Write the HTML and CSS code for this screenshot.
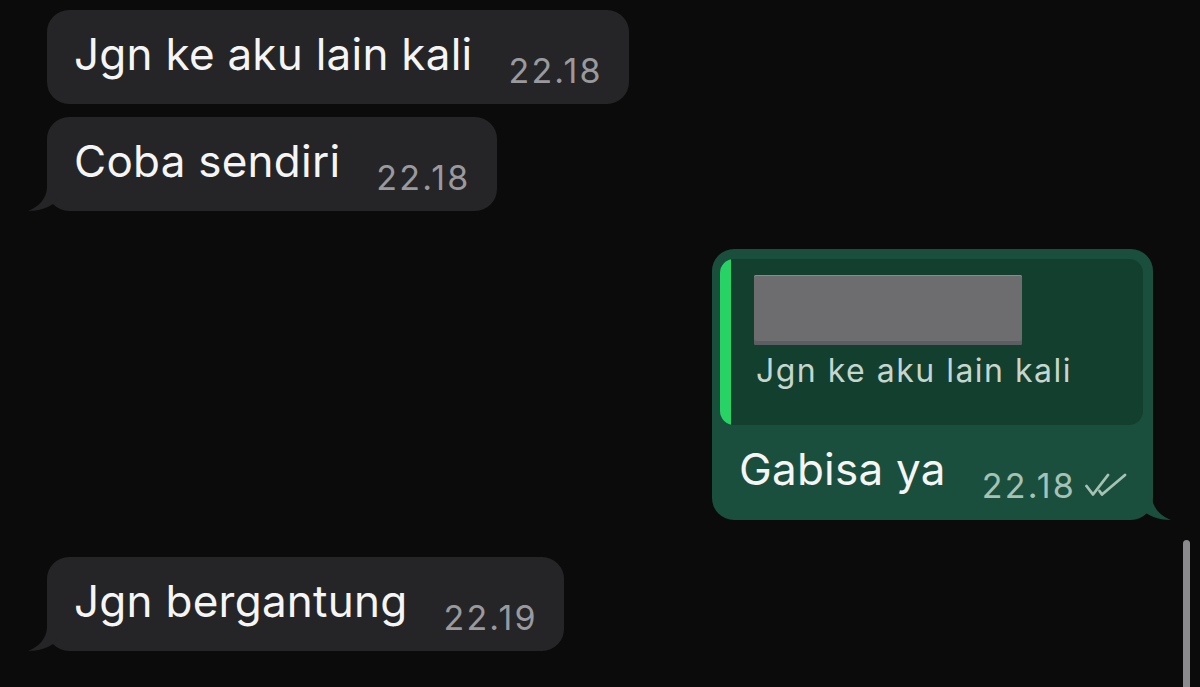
FILE: index.html
```html
<!DOCTYPE html>
<html lang="id">
<head>
<meta charset="utf-8">
<title>Chat</title>
<link rel="stylesheet" href="styles.css">
</head>
<body>
<div class="chat">
  <div class="row row-in first">
    <div class="bubble bubble-in">
      <span class="text">Jgn ke aku lain kali</span>
      <span class="time">22.18</span>
    </div>
  </div>
  <div class="row row-in second">
    <div class="bubble bubble-in">
      <span class="text">Coba sendiri</span>
      <span class="time">22.18</span>
      <svg class="tail tail-in" viewBox="0 0 50 40" width="50" height="40" aria-hidden="true"><path d="M19,2 L19,16 C19,27 11,36 0,40 C11,40 20,37 28,31 L30,20 L30,2 Z"/></svg>
    </div>
  </div>
  <div class="row row-out">
    <div class="bubble bubble-out">
      <div class="quote">
        <div class="quote-bar"></div>
        <div class="quote-body">
          <div class="redact"></div>
          <div class="quote-text">Jgn ke aku lain kali</div>
        </div>
      </div>
      <div class="msg-line">
        <span class="text">Gabisa ya</span>
        <span class="meta">
          <span class="time">22.18</span>
          <svg class="ticks" viewBox="0 0 42 24" width="42" height="24" aria-hidden="true"><path d="M1.5,13 L8,21.5 L23,2"/><path d="M14.5,18 L17,21.5 L40,2"/></svg>
        </span>
      </div>
      <svg class="tail tail-out" viewBox="0 0 50 40" width="50" height="40" aria-hidden="true"><path d="M19,2 L19,16 C19,27 11,36 0,40 C11,40 20,37 28,31 L30,20 L30,2 Z"/></svg>
    </div>
  </div>
  <div class="row row-in fourth">
    <div class="bubble bubble-in">
      <span class="text">Jgn bergantung</span>
      <span class="time">22.19</span>
      <svg class="tail tail-in" viewBox="0 0 50 40" width="50" height="40" aria-hidden="true"><path d="M19,2 L19,16 C19,27 11,36 0,40 C11,40 20,37 28,31 L30,20 L30,2 Z"/></svg>
    </div>
  </div>
</div>
<div class="scrollbar"></div>
</body>
</html>
```

FILE: styles.css
```css
html, body {
  margin: 0;
  padding: 0;
  background: #0b0b0b;
  height: 687px;
  overflow: hidden;
}

body {
  font-family: Inter, "Liberation Sans", Arial, sans-serif;
  color: #f4f4f4;
}

.chat {
  display: flex;
  flex-direction: column;
  padding: 10px 47px 0 47px;
}

.row {
  display: flex;
}

.row-in {
  justify-content: flex-start;
}

.row-out {
  justify-content: flex-end;
}

.second {
  margin-top: 13px;
}

.row-out {
  margin-top: 38px;
}

.fourth {
  margin-top: 37px;
}

.bubble {
  position: relative;
  border-radius: 22px;
}

.bubble-in {
  display: flex;
  align-items: flex-end;
  gap: 36px;
  padding: 16px 26px 22px 27px;
  background: #252527;
}

.text {
  font-size: 44px;
  line-height: 56px;
  letter-spacing: 0.25px;
  color: #f5f5f5;
  white-space: nowrap;
}

.time {
  font-size: 34px;
  line-height: 22px;
  letter-spacing: 2.2px;
  color: #9a9a9e;
  white-space: nowrap;
}

.tail {
  position: absolute;
  bottom: 0;
}

.tail-in {
  left: -19px;
  fill: #252527;
}

.tail-out {
  right: -18px;
  transform: scaleX(-1);
  fill: #1b4f3d;
}

.bubble-out {
  display: flex;
  flex-direction: column;
  background: #1b4f3d;
}

.quote {
  display: flex;
  margin: 10px 10px 0 8px;
  border-radius: 14px;
  overflow: hidden;
  background: #133f2f;
}

.quote-bar {
  width: 11px;
  flex: none;
  background: #28d366;
}

.quote-body {
  display: flex;
  flex-direction: column;
  align-items: flex-start;
  padding: 16px 0 34px 23px;
}

.redact {
  width: 268px;
  height: 70px;
  border-radius: 2px;
  background: #6d6d70;
  box-shadow: inset 0 1px 0 #8a8a8e, inset 0 -4px 0 #5d5e63;
}

.quote-text {
  margin-top: 6px;
  padding-left: 2px;
  font-size: 32px;
  line-height: 40px;
  letter-spacing: 1.5px;
  color: #c6d6ce;
  white-space: nowrap;
}

.msg-line {
  display: flex;
  align-items: flex-end;
  justify-content: space-between;
  gap: 36px;
  padding: 16px 26px 23px 27px;
}

.meta {
  display: flex;
  align-items: flex-end;
  gap: 9px;
}

.bubble-out .time {
  color: #a6c2b6;
}

.ticks {
  fill: none;
  stroke: #a6c2b6;
  stroke-width: 2.8;
  stroke-linecap: round;
  stroke-linejoin: round;
}

.scrollbar {
  position: fixed;
  right: 10px;
  top: 540px;
  width: 7px;
  height: 170px;
  border-radius: 4px;
  background: #8b8b8e;
}
```
